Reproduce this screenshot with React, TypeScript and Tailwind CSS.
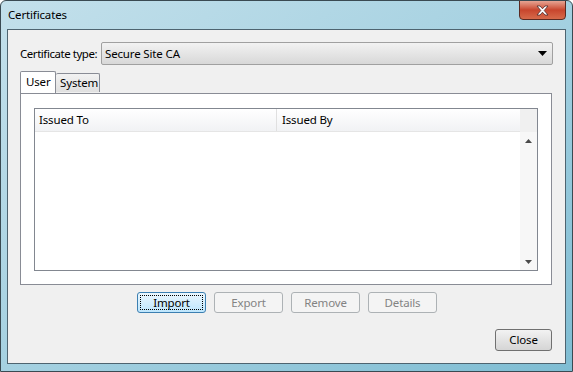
import React from "react";

const font = { fontFamily: '"Noto Sans", "Liberation Sans", sans-serif' };

const DisabledButton = ({ label }: { label: string }) => (
  <div className="flex h-[21px] w-[69px] items-center justify-center rounded-[3px] border border-[#adb2b5] bg-[#f4f4f4] text-[#838383]">
    {label}
  </div>
);

export default function App() {
  return (
    <div
      className="relative flex h-[372px] w-[573px] flex-col overflow-hidden rounded-t-[6px] border border-[#3a4a52] bg-gradient-to-br from-[#c3e0eb] via-[#a5d1e1] to-[#7fbdd3] text-[11.5px] leading-[16px] tracking-[-0.15px] text-black"
      style={font}
    >
      {/* title bar */}
      <div className="flex h-[28px] shrink-0 items-start justify-between pl-[7px]">
        <span className="mt-[6px]">Certificates</span>
        <div className="mr-[6px] -mt-px flex h-[20px] w-[47px] items-center justify-center rounded-b-[4px] border border-[#5a2a22] bg-gradient-to-b from-[#e6a493] via-[#c8452d] to-[#d66a4a]">
          <svg width="15" height="11" viewBox="0 0 15 11">
            <path
              d="M2 1 L5 1 L7.5 3.8 L10 1 L13 1 L9.2 5.5 L13 10 L10 10 L7.5 7.2 L5 10 L2 10 L5.8 5.5 Z"
              fill="#fff"
              stroke="#4a2a2a"
              strokeWidth="0.8"
            />
          </svg>
        </div>
      </div>

      {/* client area */}
      <div className="mx-[6px] mb-[7px] flex flex-1 flex-col border border-[#4e6470] bg-[#f0f0f0] px-[12px] pt-[12px]">
        {/* certificate type */}
        <div className="flex items-center">
          <span className="w-[81px] shrink-0 whitespace-nowrap tracking-[-0.45px]">Certificate type:</span>
          <div className="relative flex h-[23px] flex-1 items-center rounded-[2px] border border-[#a0a0a0] bg-gradient-to-b from-[#f2f2f2] to-[#d8d8d8] pl-[3px]">
            Secure Site CA
            <svg className="absolute right-[5px] top-[8px]" width="9" height="5" viewBox="0 0 9 5">
              <path d="M0 0 H9 L4.5 5 Z" fill="#000" />
            </svg>
          </div>
        </div>

        {/* tabs */}
        <div className="mt-[7px] flex h-[21px] items-end">
          <div className="relative z-10 flex h-[22px] w-[36px] items-start rounded-t-[2px] border border-b-0 border-[#898c95] bg-white pl-[5px] pt-[2px]">
            User
          </div>
          <div className="mb-[1px] flex h-[19px] w-[44px] items-center rounded-t-[2px] border border-l-0 border-b-0 border-[#898c95] bg-gradient-to-b from-[#f2f2f2] to-[#e0e0e0] pl-[4px]">
            System
          </div>
        </div>
        <div className="mr-[1px] flex h-[192px] flex-col border border-[#898c95] bg-white px-[13px] pb-[13px] pt-[14px]">
          <div className="flex flex-1 flex-col border border-[#828790] bg-white">
            <div className="flex flex-1">
              <div className="flex flex-1 flex-col">
                <div className="flex h-[23px] border-b border-[#e5e5e5] bg-gradient-to-b from-white to-[#f1f2f4]">
                  <div className="flex w-[242px] items-center border-r border-[#e0e0e0] pl-[4px]">Issued To</div>
                  <div className="flex flex-1 items-center pl-[5px]">Issued By</div>
                </div>
                <div className="flex-1" />
              </div>
              <div className="flex w-[17px] flex-col bg-[#f0f0f0]">
                <div className="h-[23px] bg-[#f0f0f0]" />
                <div className="flex h-[17px] items-center justify-center bg-[#f7f7f7]">
                  <svg width="7" height="4" viewBox="0 0 7 4">
                    <path d="M3.5 0 L7 4 H0 Z" fill="#4a4a4a" />
                  </svg>
                </div>
                <div className="flex-1 bg-[#f7f7f7]" />
                <div className="flex h-[17px] items-center justify-center bg-[#f7f7f7]">
                  <svg width="7" height="4" viewBox="0 0 7 4">
                    <path d="M0 0 H7 L3.5 4 Z" fill="#4a4a4a" />
                  </svg>
                </div>
              </div>
            </div>
          </div>
        </div>

        {/* action buttons */}
        <div className="mt-[7px] flex justify-center gap-[8px] pl-[1px]">
          <div className="flex h-[21px] w-[69px] items-center justify-center rounded-[3px] border border-[#3c7fb1] bg-gradient-to-b from-[#eaf6fd] to-[#bee6fd] p-[2px]">
            <div className="flex h-full w-full items-center justify-center border border-dotted border-black">
              Import
            </div>
          </div>
          <DisabledButton label="Export" />
          <DisabledButton label="Remove" />
          <DisabledButton label="Details" />
        </div>

        {/* close */}
        <div className="mr-[1px] mt-[16px] flex justify-end">
          <div className="flex h-[22px] w-[57px] items-center justify-center rounded-[3px] border border-[#707070] bg-gradient-to-b from-[#f2f2f2] to-[#d5d5d5]">
            Close
          </div>
        </div>
      </div>
    </div>
  );
}
